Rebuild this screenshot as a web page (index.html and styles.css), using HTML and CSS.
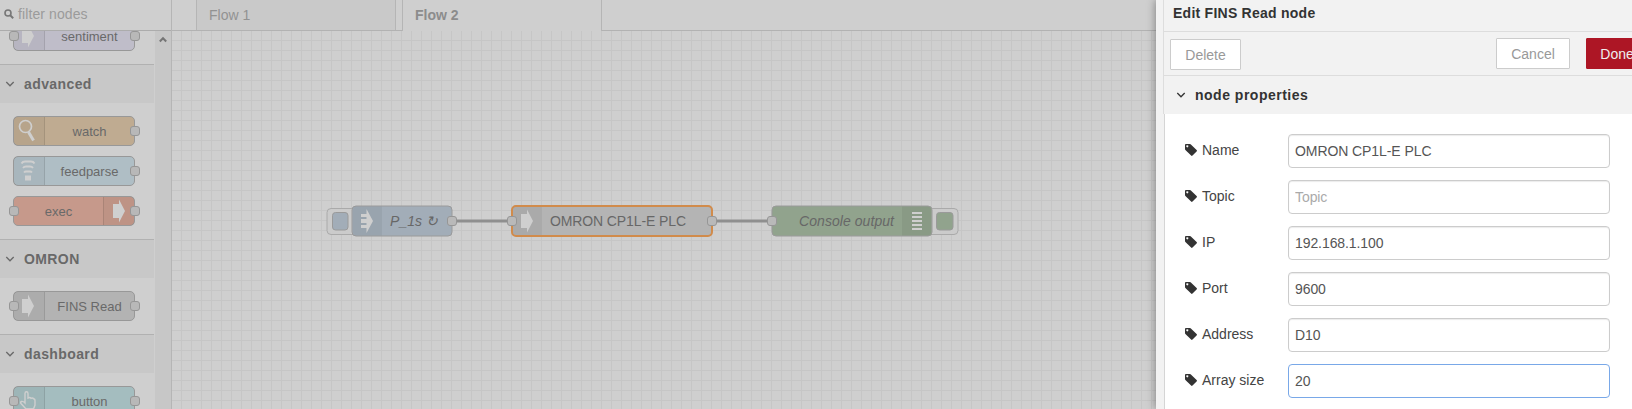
FILE: index.html
```html
<!DOCTYPE html>
<html lang="en">
<head>
<meta charset="utf-8">
<title>Node-RED</title>
<link rel="stylesheet" href="styles.css">
</head>
<body>
<svg class="defs" width="0" height="0" aria-hidden="true">
  <symbol id="arrow" viewBox="0 0 30 30"><path d="M9 8h6V3.500L21 15l-6 11.500V22H9z"/></symbol>
  <symbol id="inject" viewBox="0 0 30 30"><path d="M9 8h5.500V3L21 15l-6.500 12v-5H9v-3h5.500v-2H9v-4h5.500v-2H9z"/></symbol>
  <symbol id="chevron" viewBox="0 0 10 10"><path d="M1.300 3l3.700 3.800L8.700 3" fill="none" stroke="currentColor" stroke-width="1.300"/></symbol>
  <symbol id="tag" viewBox="0 0 12 12"><path fill="currentColor" fill-rule="evenodd" d="M.9 0H5q.5 0 .9.400L11.600 6q.7.700 0 1.400l-4.100 4.200q-.7.700-1.400 0L.4 5.900Q0 5.500 0 5V.9Q0 0 .9 0zM2.300 1.300a1 1 0 1 0 .01 0z"/></symbol>
</svg>
<div class="app">
  <aside class="palette">
    <div class="search">
      <svg width="10" height="10" viewBox="0 0 10 10"><circle cx="4" cy="4" r="3" fill="none" stroke="#777" stroke-width="1.600"/><path d="M6.200 6.200L9.200 9.200" stroke="#777" stroke-width="2"/></svg>
      <span>filter nodes</span>
    </div>
    <div class="palette-body">
      <div class="list">
        <div class="nodes first">
          <div class="node lilac"><i class="port in"></i><span class="icon"><svg><use href="#arrow"/></svg></span><span class="label">sentiment</span><i class="port out"></i></div>
        </div>
        <div class="category"><svg class="chev"><use href="#chevron"/></svg>advanced</div>
        <div class="nodes">
          <div class="node tan"><span class="icon"><svg viewBox="0 0 30 30"><circle cx="12.500" cy="10.500" r="6" fill="none" stroke="#cfcfcf" stroke-width="1.700"/><path d="M15.500 16l5 8.500" stroke="#cfcfcf" stroke-width="3"/></svg></span><span class="label">watch</span><i class="port out"></i></div>
          <div class="node blue"><span class="icon"><svg viewBox="0 0 30 30"><path d="M12 19.500h6v5h-6z"/><path d="M8.500 7.500Q9.500 5.500 12 5.500h6q2.500 0 3.500 2M10 12q1-1.500 3-1.500h4q2 0 3 1.500M11 16.500q.8-1 2-1h4q1.200 0 2 1" fill="none" stroke="#cfcfcf" stroke-width="1.800"/></svg></span><span class="label">feedparse</span><i class="port out"></i></div>
          <div class="node red"><i class="port in"></i><span class="label">exec</span><span class="icon right"><svg><use href="#arrow"/></svg></span><i class="port out"></i></div>
        </div>
        <div class="category"><svg class="chev"><use href="#chevron"/></svg>OMRON</div>
        <div class="nodes">
          <div class="node gray"><i class="port in"></i><span class="icon"><svg><use href="#arrow"/></svg></span><span class="label">FINS Read</span><i class="port out"></i></div>
        </div>
        <div class="category"><svg class="chev"><use href="#chevron"/></svg>dashboard</div>
        <div class="nodes">
          <div class="node teal"><i class="port in"></i><span class="icon"><svg viewBox="0 0 30 30"><path d="M12 17V7.500q0-1.700 1.500-1.700T15 7.500V12q2-1 3 .300 2-.700 2.500.500 1.500 0 1.500 2V19l-1.500 4H13l-5-5.500q-1-1.500.5-2t3.500 1.500z" fill="none" stroke="#cfcfcf" stroke-width="1.400"/><path d="M12.500 22.500h8.500V27h-8.500z"/></svg></span><span class="label">button</span><i class="port out"></i></div>
        </div>
      </div>
      <div class="scrollbar"><svg width="8" height="7" viewBox="0 0 8 7"><path d="M.8 5.500L4 2.200l3.200 3.300" fill="none" stroke="#757575" stroke-width="2"/></svg></div>
    </div>
  </aside>
  <main class="workspace">
    <div class="tabs"><div class="tab">Flow 1</div><div class="tab active">Flow 2</div></div>
    <svg class="canvas" width="984" height="378" viewBox="172 31 984 378">
      <defs><pattern id="grid" x="172" y="31" width="10" height="10" patternUnits="userSpaceOnUse"><path d="M9 0h1v10H0V9h9z" fill="#c6c6c6"/></pattern></defs>
      <rect x="172" y="31" width="984" height="378" fill="url(#grid)"/>
      <path class="wire" d="M452 221h60M712 221h60"/>
      <rect class="pad" x="327" y="208.500" width="32" height="26" rx="4"/>
      <rect class="knob inject-fill" x="332.500" y="212.500" width="15.500" height="17.500" rx="3"/>
      <g class="flow-node">
        <rect class="inject-fill" x="352" y="206" width="100" height="30" rx="4"/>
        <path class="shade" d="M356 206.500h26v29h-26q-3 0-3-3v-23q0-3 3-3z"/>
        <use href="#inject" x="352" y="206" width="30" height="30"/>
        <text class="italic" x="390" y="225.500" textLength="48">P_1s ↻</text>
        <rect class="pin" x="447.500" y="216.500" width="9" height="9" rx="2.500"/>
      </g>
      <g class="flow-node">
        <rect class="selected" x="512" y="206" width="200" height="30" rx="4"/>
        <path class="shade" d="M516 207h26v28h-26q-3 0-3-3v-22q0-3 3-3z"/>
        <use href="#arrow" x="512" y="206" width="30" height="30"/>
        <text x="550" y="225.500" textLength="136">OMRON CP1L-E PLC</text>
        <rect class="pin" x="507.500" y="216.500" width="9" height="9" rx="2.500"/>
        <rect class="pin" x="707.500" y="216.500" width="9" height="9" rx="2.500"/>
      </g>
      <rect class="pad" x="926" y="208.500" width="32" height="26" rx="4"/>
      <rect class="knob debug-fill" x="936.500" y="212.500" width="16.500" height="17.500" rx="3"/>
      <g class="flow-node">
        <rect class="debug-fill" x="772" y="206" width="160" height="30" rx="4"/>
        <path class="shade" d="M902 206.500h26q3 0 3 3v23q0 3-3 3h-26z"/>
        <path d="M912 213h10M912 217h10M912 221h10M912 225h10M912 229h10" stroke="#cfcfcf" stroke-width="2"/>
        <text class="italic" x="799" y="225.500" textLength="95">Console output</text>
        <rect class="pin" x="767.500" y="216.500" width="9" height="9" rx="2.500"/>
      </g>
    </svg>
  </main>
  <section class="tray">
    <h1 class="tray-title">Edit FINS Read node</h1>
    <div class="toolbar">
      <button class="btn delete">Delete</button>
      <button class="btn cancel">Cancel</button>
      <button class="btn primary">Done</button>
    </div>
    <h2 class="section"><svg class="chev"><use href="#chevron"/></svg>node properties</h2>
    <form class="form">
      <label class="row"><svg class="tag"><use href="#tag"/></svg><span>Name</span><input value="OMRON CP1L-E PLC"></label>
      <label class="row"><svg class="tag"><use href="#tag"/></svg><span>Topic</span><input placeholder="Topic"></label>
      <label class="row"><svg class="tag"><use href="#tag"/></svg><span>IP</span><input value="192.168.1.100"></label>
      <label class="row"><svg class="tag"><use href="#tag"/></svg><span>Port</span><input value="9600"></label>
      <label class="row"><svg class="tag"><use href="#tag"/></svg><span>Address</span><input value="D10"></label>
      <label class="row"><svg class="tag"><use href="#tag"/></svg><span>Array size</span><input class="focused" value="20"></label>
    </form>
  </section>
</div>
</body>
</html>
```
FILE: styles.css
```css
* { box-sizing: border-box; }
body { margin: 0; font: 14px/20px "Liberation Sans", Arial, sans-serif; overflow: hidden; }
.defs { display: block; }
.app { display: flex; width: 1632px; height: 409px; overflow: hidden; background: #cfcfcf; }

/* palette */
.palette { display: flex; flex-direction: column; flex: none; width: 172px; border-right: 1px solid #b5b5b5; }
.search { display: flex; align-items: center; gap: 4px; flex: none; height: 31px; padding: 0 0 3px 4px; border-bottom: 1px solid #acacac; color: #9b9b9b; letter-spacing: .1px; }
.palette-body { display: flex; flex: 1; min-height: 0; overflow: hidden; }
.list { flex: none; width: 154px; }
.scrollbar { display: flex; justify-content: center; flex: 1; margin-left: 1px; padding-top: 5px; background: #c7c7c7; }
.category { display: flex; align-items: center; gap: 9px; height: 39px; padding: 0 0 0 5px; border-top: 1px solid #b1b1b1; background: #c8c8c8; color: #696969; font-weight: bold; letter-spacing: .4px; }
.chev { flex: none; width: 10px; height: 10px; }
.nodes { display: flex; flex-direction: column; gap: 10px; padding: 13px; }
.nodes.first { margin-top: -23px; }
.node { position: relative; display: flex; width: 122px; height: 30px; border: 1px solid #989898; border-radius: 5px; color: #696969; font-size: 13px; line-height: 30px; }
.icon { width: 31px; height: 28px; border-right: 1px solid rgba(0,0,0,.1); background: rgba(0,0,0,.04); }
.icon.right { border-right: 0; border-left: 1px solid rgba(0,0,0,.1); }
.icon svg { display: block; width: 30px; height: 30px; margin: -1px 0 0 -1px; fill: #cfcfcf; }
.icon.right svg { margin-left: 0; }
.label { flex: 1; height: 28px; text-align: center; }
.port { position: absolute; top: 9px; width: 10px; height: 10px; border: 1px solid #969696; border-radius: 3px; background: #b8b8b8; }
.port.in { left: -5px; }
.port.out { right: -6px; }
.lilac { background: #bfbdc9; }
.tan { background: #bfab91; }
.blue { background: #afbec5; }
.red { background: #c6998b; }
.gray { background: #b3b3b3; }
.teal { background: #a4bdbf; }

/* workspace */
.workspace { flex: none; width: 984px; }
.tabs { display: flex; gap: 6px; height: 31px; padding-left: 24px; border-bottom: 1px solid #b2b2b2; }
.tab { width: 200px; height: 30px; padding: 5px 12px; border: solid #b5b5b5; border-width: 0 1px; background: #c9c9c9; color: #929292; }
.tab.active { height: 31px; background: #cfcfcf; font-weight: bold; color: #8c8c8c; }
.canvas { display: block; font-size: 14px; }
.wire { stroke: #8f8f8f; stroke-width: 3; }
.pad { fill: #cbcbcb; stroke: #aaa; }
.knob, .flow-node > rect { stroke: #9a9a9a; }
.inject-fill { fill: #a2adb8; }
.debug-fill { fill: #91a38d; }
.flow-node > .selected { fill: #b4b4b4; stroke: #d18b4b; stroke-width: 2; }
.flow-node > .pin { fill: #b9b9b9; stroke: #969696; }
.shade { fill: rgba(0,0,0,.05); }
.flow-node use { fill: #cfcfcf; }
.flow-node text { fill: #676767; }
.italic { font-style: italic; }

/* edit tray */
.tray { position: relative; flex: none; width: 476px; border-left: 8px solid #f2f2f2; background: #fff; box-shadow: -1px 0 8px rgba(0,0,0,.35), inset 1px 0 #d5d5d5; color: #333; }
.tray-title { height: 32px; margin: 0 0 0 -1px; padding: 3px 9px; border: solid #ddd; border-width: 0 0 1px 1px; background: #f2f2f2; font-size: 14px; line-height: 20px; letter-spacing: .25px; }
.toolbar { display: flex; height: 44px; margin-left: -1px; padding: 6px 0 0 6px; border: solid #ddd; border-width: 0 0 1px 1px; background: #f2f2f2; }
.btn { flex: none; height: 31px; padding: 0; border: 1px solid #ccc; border-radius: 1px; background: #fff; color: #999; font: inherit; }
.delete { width: 71px; margin-top: 1px; }
.cancel { width: 74px; margin-left: 255px; }
.primary { width: 62px; margin-left: 16px; border-color: #ad1625; background: #ad1625; color: #eee; }
.section { display: flex; align-items: center; gap: 9px; height: 38px; margin: 0 0 0 -1px; padding: 0 0 0 12px; border-left: 1px solid #ddd; background: #f2f2f2; font-size: 14px; letter-spacing: .5px; }
.form { display: flex; flex-direction: column; gap: 12px; padding: 20px 22px 0 21px; }
.row { display: flex; height: 34px; color: #444; }
.tag { width: 12px; height: 12px; margin: 10px 5px 0 0; color: #333; }
.row span { flex: none; width: 86px; padding-top: 6px; }
.row input { flex: none; width: 322px; height: 34px; padding: 0 6px; border: 1px solid #ccc; border-radius: 4px; box-shadow: inset 0 1px 1px rgba(0,0,0,.08); background: #fff; color: #555; font: inherit; letter-spacing: -.08px; }
.row input::placeholder { color: #aaa; }
.row .focused { border-color: #79a8e8; box-shadow: none; }
```
